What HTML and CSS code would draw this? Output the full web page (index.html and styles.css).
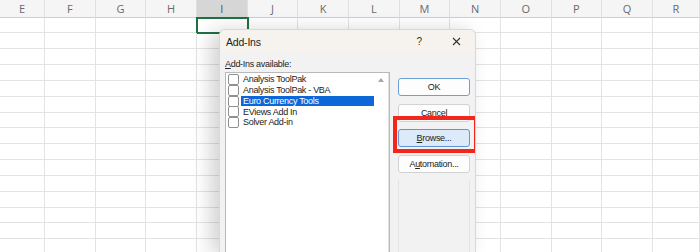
FILE: index.html
```html
<!DOCTYPE html>
<html lang="en">
<head>
    <meta charset="UTF-8">
    <meta name="viewport" content="width=device-width, initial-scale=1.0">
    <title>Add-Ins</title>
    <link rel="stylesheet" href="styles.css">
</head>
<body>
    <div class="sheet" id="sheet"></div>

    <!-- Add-Ins dialog -->
    <div class="dialog">
        <div class="titlebar">
            <span class="title">Add-Ins</span>
            <span class="help">?</span>
            <svg class="close" width="9" height="9" viewBox="0 0 9 9">
                <path d="M1 1 L8 8 M8 1 L1 8" stroke="#333" stroke-width="1.1" fill="none"/>
            </svg>
        </div>
        <div class="dialog-body">
            <div class="left-pane">
                <div class="label"><u>A</u>dd-Ins available:</div>
                <div class="listbox">
                    <ul class="items">
                        <li><span class="check"></span><span class="name">Analysis ToolPak</span></li>
                        <li><span class="check"></span><span class="name">Analysis ToolPak - VBA</span></li>
                        <li class="selected"><span class="check"></span><span class="name">Euro Currency Tools</span></li>
                        <li><span class="check"></span><span class="name">EViews Add In</span></li>
                        <li><span class="check"></span><span class="name">Solver Add-in</span></li>
                    </ul>
                    <div class="scrollbar">
                        <span class="arrow up"></span>
                        <span class="arrow down"></span>
                    </div>
                </div>
            </div>
            <div class="buttons">
                <button class="btn default">OK</button>
                <button class="btn">Cancel</button>
                <button class="btn hover"><u>B</u>rowse...</button>
                <button class="btn">A<u>u</u>tomation...</button>
                <div class="info-frame"></div>
            </div>
        </div>
        <div class="highlight-box"></div>
    </div>

    <script>
        // build the spreadsheet grid behind the dialog
        const cols = ['E', 'F', 'G', 'H', 'I', 'J', 'K', 'L', 'M', 'N', 'O', 'P', 'Q', 'R'];
        const sheet = document.getElementById('sheet');
        let html = '';
        cols.forEach(c => {
            html += `<div class="col-head${c === 'I' ? ' active' : ''}">${c}</div>`;
        });
        for (let r = 1; r <= 15; r++) {
            cols.forEach(c => {
                const sel = (c === 'I' && r === 1) ? ' selected' : '';
                html += `<div class="cell${sel}"></div>`;
            });
        }
        sheet.innerHTML = html;
    </script>
</body>
</html>
```

FILE: styles.css
```css
body {
    margin: 0;
    width: 700px;
    height: 252px;
    overflow: hidden;
    background: #ffffff;
    font-family: "Liberation Sans", Arial, sans-serif;
    position: relative;
}
.sheet {
    display: grid;
    grid-template-columns: 45px repeat(12, 50.67px) 47px;
    grid-template-rows: 17.5px;
    grid-auto-rows: 15.85px;
    height: 252px;
    overflow: hidden;
}
.col-head {
    background: #f5f5f5;
    border-right: 1px solid #e0e0e0;
    border-bottom: 1px solid #cfcfcf;
    box-sizing: border-box;
    color: #6a6a6a;
    font-family: "Open Sans", sans-serif;
    font-size: 11px;
    text-align: center;
    line-height: 17px;
}
.col-head.active {
    background: #d6d6d6;
    color: #555;
}
.cell {
    border-right: 1px solid #e3e3e3;
    border-bottom: 1px solid #e3e3e3;
    box-sizing: border-box;
}
.cell.selected {
    outline: 2px solid #1f7144;
    outline-offset: -1px;
}
.dialog {
    position: absolute;
    left: 219px;
    top: 29px;
    width: 257px;
    height: 223px;
    background: #f2f2f2;
    border-radius: 6px 6px 0 0;
    box-shadow: -8px 2px 20px rgba(0, 0, 0, 0.18);
    border: 1px solid #d8d8d8;
    border-bottom: none;
    box-sizing: border-box;
    overflow: hidden;
}
.titlebar {
    height: 23px;
    background: #f6f2ed;
    display: flex;
    align-items: center;
    padding: 0 0 0 6px;
    color: #222;
}
.title {
    font-size: 10.5px;
    letter-spacing: -0.2px;
    flex: 1;
}
.help {
    font-size: 10px;
    color: #333;
    margin-right: 30px;
}
.close {
    margin-right: 14px;
}
.dialog-body {
    display: flex;
    padding: 5px 0 0 5px;
}
.left-pane {
    width: 165px;
}
.label {
    font-size: 9px;
    letter-spacing: -0.3px;
    color: #222;
    height: 12px;
    line-height: 12px;
    margin-bottom: 2px;
}
.listbox {
    height: 200px;
    background: #ffffff;
    border: 1px solid #b9b9b9;
    display: flex;
}
.items {
    list-style: none;
    margin: 0;
    padding: 1px 0 0 2px;
    flex: 1;
}
.items li {
    display: flex;
    align-items: center;
    height: 10.8px;
    font-size: 9px;
    letter-spacing: -0.3px;
    color: #222;
}
.check {
    width: 9px;
    height: 9px;
    border: 1px solid #8f8f8f;
    border-radius: 2px;
    background: #fff;
    margin-right: 2px;
    flex: none;
}
.name {
    flex: 1;
    padding-left: 2px;
    line-height: 10.5px;
}
.items li.selected .name {
    background: #0d67d9;
    color: #ffffff;
}
.scrollbar {
    width: 14px;
    display: flex;
    flex-direction: column;
    justify-content: space-between;
    align-items: center;
    padding: 5px 0 6px;
    border-right: 1px solid #e2e2e2;
}
.arrow {
    width: 0;
    height: 0;
    border-left: 3px solid transparent;
    border-right: 3px solid transparent;
}
.arrow.up {
    border-bottom: 4px solid #a6a6a6;
}
.arrow.down {
    border-top: 4px solid #a6a6a6;
}
.buttons {
    display: flex;
    flex-direction: column;
    gap: 7.5px;
    margin: 20px 0 0 8px;
    width: 72px;
}
.btn {
    height: 18px;
    background: #fdfdfd;
    border: 1px solid #d2d2d2;
    border-radius: 3px;
    font-family: "Liberation Sans", Arial, sans-serif;
    font-size: 9px;
    letter-spacing: -0.3px;
    color: #222;
    padding: 0;
    cursor: pointer;
}
.btn.default {
    border-color: #6a9fd8;
}
.btn.hover {
    background: #dceafa;
    border-color: #5f96d4;
}
.info-frame {
    height: 80px;
    border-left: 1px solid #e4e4e4;
    border-right: 1px solid #e4e4e4;
}
.highlight-box {
    position: absolute;
    left: 173px;
    top: 86px;
    width: 85px;
    height: 37px;
    border: 4px solid #f2261b;
    box-sizing: border-box;
}
```
